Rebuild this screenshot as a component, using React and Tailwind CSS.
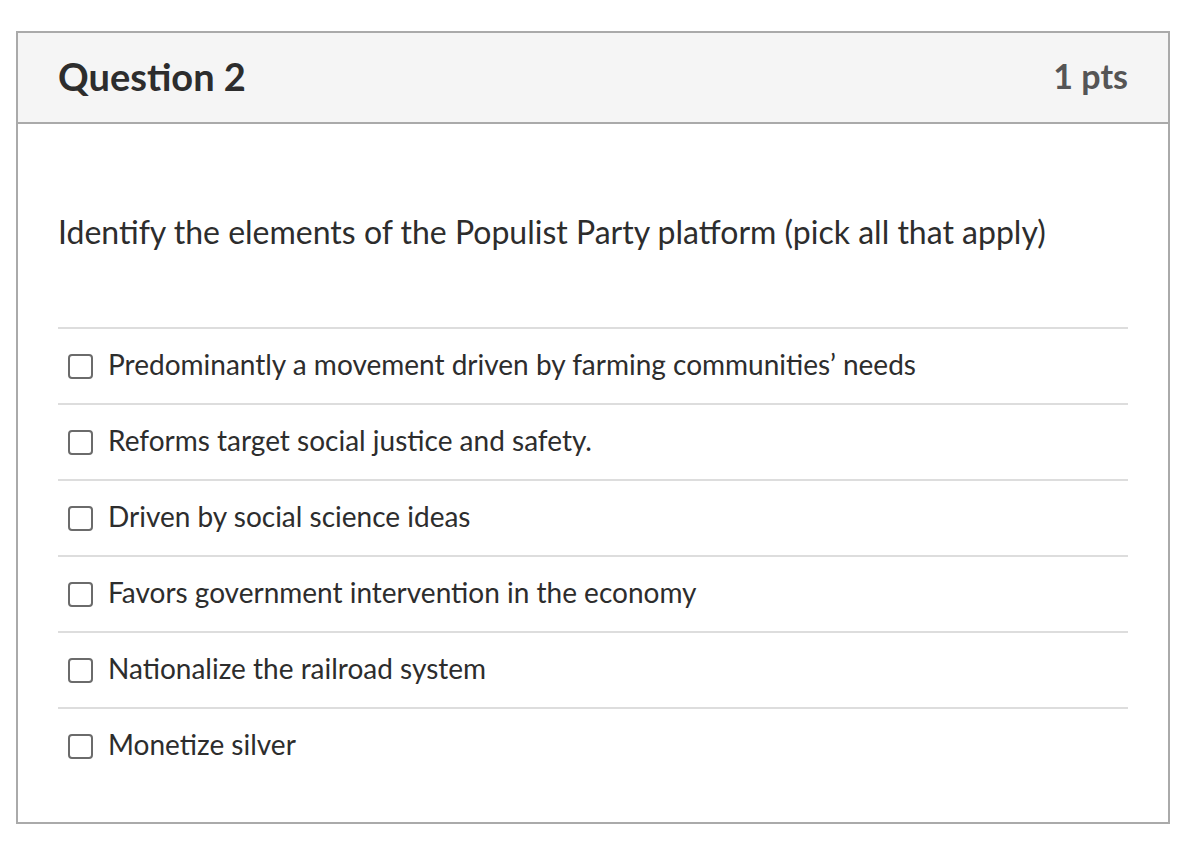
import React from "react";

const options = [
  "Predominantly a movement driven by farming communities\u2019 needs",
  "Reforms target social justice and safety.",
  "Driven by social science ideas",
  "Favors government intervention in the economy",
  "Nationalize the railroad system",
  "Monetize silver",
];

export default function App() {
  return (
    <div className="min-h-screen w-full bg-white pt-[31px] pl-4 font-['Lato','Noto_Sans',sans-serif] text-[#2d2d2d]">
      <div className="w-[1154px] border-2 border-[#aaaaaa] bg-white">
        {/* header */}
        <div className="h-[91px] bg-[#f5f5f5] border-b-2 border-[#aaaaaa] flex items-center justify-between px-10">
          <h2 className="text-[38px] font-bold leading-none pb-[4px]">Question 2</h2>
          <div className="text-[34px] font-bold leading-none pb-[3px] text-[#555555]">1 pts</div>
        </div>

        <div className="px-10 pt-[89px] pb-[39px]">
          <p className="text-[32px] leading-[38px]">
            Identify the elements of the Populist Party platform (pick all that apply)
          </p>

          <div className="mt-[76px]">
            {options.map((opt, i) => (
              <label
                key={i}
                className="flex items-center h-[76px] border-t-2 border-[#dddddd] cursor-pointer"
              >
                <span className="ml-[10px] h-[25px] w-[25px] shrink-0 rounded-[4px] border-2 border-[#6b6b6b] bg-white" />
                <span className="ml-[15px] pb-[5px] text-[28px] leading-none">{opt}</span>
              </label>
            ))}
          </div>
        </div>
      </div>
    </div>
  );
}
